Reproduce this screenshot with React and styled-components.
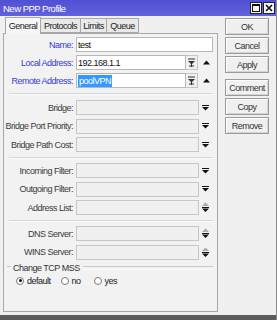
import React from 'react'
import styled, { createGlobalStyle } from 'styled-components'

const Global = createGlobalStyle`
  html, body { margin: 0; padding: 0; background: #f0f0f0; }
  * { box-sizing: border-box; }
`

const FONT = `"Liberation Sans", Arial, sans-serif`

const Window = styled.div`
  width: 277px;
  height: 320px;
  background: #f0f0f0;
  border-right: 1px solid #8a8a8a;
  display: flex;
  flex-direction: column;
  overflow: hidden;
  font-family: ${FONT};
  font-size: 9px;
  letter-spacing: -0.5px;
  color: #333;
`

const TitleBar = styled.div`
  height: 16px;
  flex: none;
  display: flex;
  align-items: center;
  justify-content: space-between;
  padding: 0 1px 0 3px;
  background: linear-gradient(#5050d4, #6262dc);
  color: #fff;
  font-size: 9.5px;
`

const TitleButtons = styled.div`
  display: flex;
  gap: 1px;
`

const TitleButton = styled.div`
  width: 12px;
  height: 12px;
  background: #f4f4f4;
  border: 1px solid #222;
  display: flex;
  align-items: center;
  justify-content: center;
`

const Main = styled.div`
  flex: 1;
  display: flex;
  padding-left: 3px;
`

const Left = styled.div`
  width: 215px;
  display: flex;
  flex-direction: column;
  padding-top: 1px;
`

const Tabs = styled.div`
  height: 16px;
  display: flex;
  align-items: flex-end;
  padding-left: 2px;
`

const Tab = styled.div`
  height: ${p => (p.$active ? 17 : 15)}px;
  margin-bottom: ${p => (p.$active ? -1 : 0)}px;
  width: ${p => p.$w}px;
  border: 1px solid #a8a8a8;
  border-bottom: ${p => (p.$active ? 'none' : '1px solid #a8a8a8')};
  border-left: ${p => (p.$first ? '1px solid #a8a8a8' : 'none')};
  background: ${p => (p.$active ? '#f6f6f6' : '#e9e9e9')};
  display: flex;
  align-items: center;
  justify-content: center;
  color: #222;
  position: relative;
  z-index: ${p => (p.$active ? 1 : 0)};
`

const Panel = styled.div`
  height: 279px;
  border: 1px solid #a8a8a8;
  background: #f2f2f2;
  padding: 3px 0 0 0;
  display: flex;
  flex-direction: column;
`

const Group = styled.div`
  display: flex;
  flex-direction: column;
  gap: ${p => p.$gap}px;
`

const Row = styled.div`
  height: 15px;
  display: flex;
  align-items: center;
`

const Label = styled.div`
  width: 69px;
  text-align: right;
  margin-right: 3px;
  white-space: nowrap;
  color: ${p => (p.$blue ? '#3a3ad0' : '#3a3a3a')};
`

const Field = styled.div`
  width: ${p => p.$w}px;
  height: 15px;
  border: 1px solid ${p => (p.$on ? '#b8b8b8' : '#c6c6c6')};
  background: ${p => (p.$on ? '#ffffff' : '#f0f0f0')};
  display: flex;
  align-items: center;
  padding-left: 1px;
  color: #111;
`

const Selected = styled.span`
  background: #3399ff;
  color: #fff;
  padding: 0 1px;
  line-height: 12px;
`

const SmallBtn = styled.div`
  width: 12px;
  height: 15px;
  border: 1px solid #c6c6c6;
  border-left: none;
  background: #f0f0f0;
  display: flex;
  align-items: center;
  justify-content: center;
`

const Arrow = styled.div`
  width: 11px;
  margin-left: ${p => p.$ml}px;
  display: flex;
  align-items: center;
  justify-content: center;
`

const Sep = styled.div`
  height: 2px;
  margin: ${p => p.$m};
  margin-left: 5px;
  width: 204px;
  border-top: 1px solid #d6d6d6;
  border-bottom: 1px solid #fbfbfb;
`

const Legend = styled.div`
  display: flex;
  align-items: center;
  margin: 3px 0 0 3px;
  width: 206px;
  color: #333;
  &::before, &::after {
    content: '';
    height: 2px;
    border-top: 1px solid #c8c8c8;
    border-bottom: 1px solid #fbfbfb;
  }
  &::before { width: 4px; margin-right: 2px; }
  &::after { flex: 1; margin-left: 3px; }
`

const Radios = styled.div`
  display: flex;
  align-items: center;
  margin: 3px 0 0 12px;
  color: #222;
`

const Radio = styled.label`
  display: flex;
  align-items: center;
  gap: 3px;
  margin-right: ${p => p.$mr}px;
`

const Circle = styled.span`
  width: 8px;
  height: 8px;
  border-radius: 50%;
  border: 1px solid #7a7a7a;
  background: #fff;
  display: flex;
  align-items: center;
  justify-content: center;
  &::after {
    content: '';
    width: 3px;
    height: 3px;
    border-radius: 50%;
    background: ${p => (p.$on ? '#111' : 'transparent')};
  }
`

const Buttons = styled.div`
  margin: 2px 0 0 7px;
  width: 44px;
  display: flex;
  flex-direction: column;
  gap: 2px;
`

const Button = styled.div`
  height: 17px;
  border: 1px solid #9a9a9a;
  box-shadow: inset 1px 1px 0 #fff, inset -1px -1px 0 #d4d4d4;
  background: #f0f0f0;
  display: flex;
  align-items: center;
  justify-content: center;
  color: #333;
  margin-top: ${p => p.$mt || 0}px;
`

const BottomEdge = styled.div`
  height: 5px;
  flex: none;
  margin-top: 3px;
  background: #5c5c5c;
`

const Down = () => (
  <svg width="7" height="6" viewBox="0 0 7 6">
    <rect x="0" y="0" width="7" height="1" fill="#111" />
    <path d="M0 2 H7 L3.5 5.5 Z" fill="#111" />
  </svg>
)

const Up = () => (
  <svg width="7" height="5" viewBox="0 0 7 5">
    <path d="M0 4.5 H7 L3.5 0.5 Z" fill="#111" />
  </svg>
)

const UpDown = () => (
  <svg width="7" height="11" viewBox="0 0 7 11">
    <path d="M0 4 H7 L3.5 0.5 Z" fill="#a8a8a8" />
    <rect x="0" y="5" width="7" height="1" fill="#111" />
    <path d="M0 6.5 H7 L3.5 10 Z" fill="#111" />
  </svg>
)

const PickIcon = () => (
  <svg width="7" height="9" viewBox="0 0 7 9">
    <rect x="0" y="0.5" width="7" height="1" fill="#333" />
    <path d="M0 3 H7 L3.5 6.5 Z" fill="#333" />
    <rect x="3" y="5" width="1" height="4" fill="#333" />
    <rect x="1" y="7.5" width="5" height="1" fill="#333" />
  </svg>
)

const DropRow = ({ label, icon }) => (
  <Row>
    <Label>{label}</Label>
    <Field $w={123} />
    <Arrow $ml={1}>{icon}</Arrow>
  </Row>
)

export default function App() {
  return (
    <>
      <Global />
      <Window>
        <TitleBar>
          <span>New PPP Profile</span>
          <TitleButtons>
            <TitleButton>
              <svg width="8" height="8" viewBox="0 0 8 8">
                <rect x="0.5" y="0.5" width="7" height="7" fill="none" stroke="#111" />
                <rect x="0.5" y="0.5" width="7" height="1.5" fill="#111" />
              </svg>
            </TitleButton>
            <TitleButton>
              <svg width="8" height="8" viewBox="0 0 8 8">
                <path d="M1 1 L7 7 M7 1 L1 7" stroke="#111" strokeWidth="1.6" />
              </svg>
            </TitleButton>
          </TitleButtons>
        </TitleBar>
        <Main>
          <Left>
            <Tabs>
              <Tab $active $first $w={36}>General</Tab>
              <Tab $w={40}>Protocols</Tab>
              <Tab $w={26}>Limits</Tab>
              <Tab $w={32}>Queue</Tab>
            </Tabs>
            <Panel>
              <Group $gap={3}>
                <Row>
                  <Label $blue>Name:</Label>
                  <Field $on $w={137}>test</Field>
                </Row>
                <Row>
                  <Label $blue>Local Address:</Label>
                  <Field $on $w={110}>192.168.1.1</Field>
                  <SmallBtn><PickIcon /></SmallBtn>
                  <Arrow $ml={3}><Up /></Arrow>
                </Row>
                <Row>
                  <Label $blue>Remote Address:</Label>
                  <Field $on $w={110}><Selected>poolVPN</Selected></Field>
                  <SmallBtn><PickIcon /></SmallBtn>
                  <Arrow $ml={3}><Up /></Arrow>
                </Row>
              </Group>
              <Sep $m="5px 0 5px" />
              <Group $gap={3.5}>
                <DropRow label="Bridge:" icon={<Down />} />
                <DropRow label="Bridge Port Priority:" icon={<Down />} />
                <DropRow label="Bridge Path Cost:" icon={<Down />} />
              </Group>
              <Sep $m="5px 0 4px" />
              <Group $gap={3.5}>
                <DropRow label="Incoming Filter:" icon={<Down />} />
                <DropRow label="Outgoing Filter:" icon={<Down />} />
                <DropRow label="Address List:" icon={<UpDown />} />
              </Group>
              <Sep $m="5px 0 4px" />
              <Group $gap={3.5}>
                <DropRow label="DNS Server:" icon={<UpDown />} />
                <DropRow label="WINS Server:" icon={<UpDown />} />
              </Group>
              <Legend>Change TCP MSS</Legend>
              <Radios>
                <Radio $mr={10}><Circle $on />default</Radio>
                <Radio $mr={13}><Circle />no</Radio>
                <Radio><Circle />yes</Radio>
              </Radios>
            </Panel>
          </Left>
          <Buttons>
            <Button>OK</Button>
            <Button>Cancel</Button>
            <Button>Apply</Button>
            <Button $mt={4}>Comment</Button>
            <Button>Copy</Button>
            <Button>Remove</Button>
          </Buttons>
        </Main>
        <BottomEdge />
      </Window>
    </>
  )
}
